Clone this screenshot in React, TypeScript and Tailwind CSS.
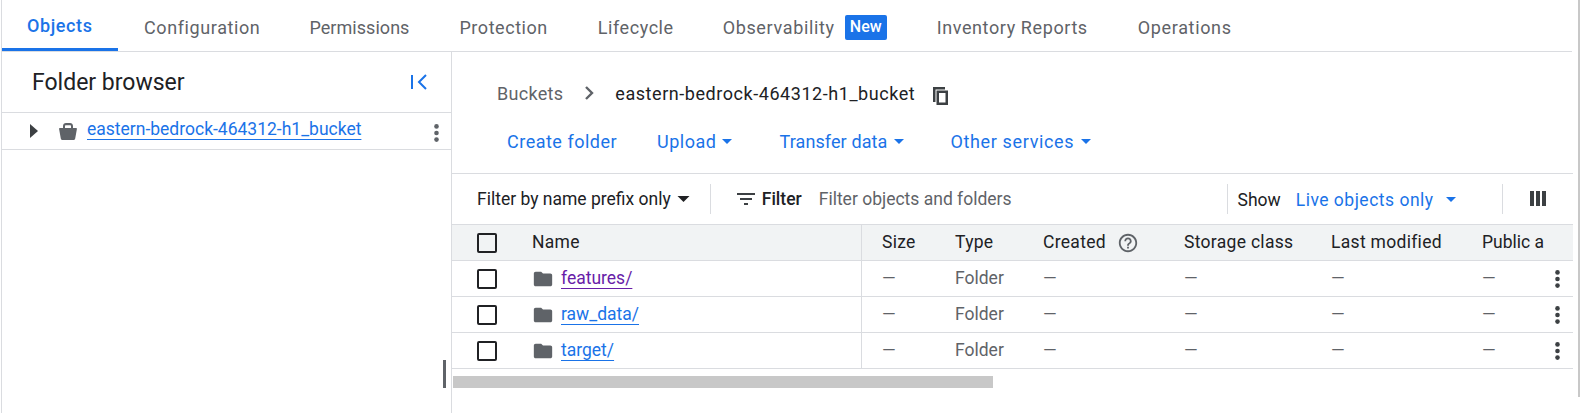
import React from "react";

const Ico = ({ d, className }: { d: string; className?: string }) => (
  <svg viewBox="0 0 24 24" className={className} fill="currentColor"><path d={d} /></svg>
);
const FOLDER = "M10 4H4c-1.1 0-2 .9-2 2v12c0 1.1.9 2 2 2h16c1.1 0 2-.9 2-2V8c0-1.1-.9-2-2-2h-8l-2-2z";
const FILTER = "M10 18h4v-2h-4v2zM3 6v2h18V6H3zm3 7h12v-2H6v2z";
const HELP = "M11 18h2v-2h-2v2zm1-16C6.48 2 2 6.48 2 12s4.48 10 10 10 10-4.48 10-10S17.52 2 12 2zm0 18c-4.41 0-8-3.59-8-8s3.59-8 8-8 8 3.59 8 8-3.59 8-8 8zm0-14c-2.21 0-4 1.79-4 4h2c0-1.1.9-2 2-2s2 .9 2 2c0 2-3 1.750-3 5h2c0-2.250 3-2.500 3-5 0-2.210-1.790-4-4-4z";

const Caret = ({ className }: { className?: string }) => (
  <svg viewBox="0 0 10 5" className={className} fill="currentColor"><path d="M0 0h10L5 5z" /></svg>
);

const Kebab = ({ className }: { className?: string }) => (
  <svg viewBox="0 0 5 18" className={`w-[5px] h-[18px] ${className ?? ""}`} fill="currentColor">
    <circle cx="2.500" cy="2.400" r="2.300" />
    <circle cx="2.500" cy="9" r="2.300" />
    <circle cx="2.500" cy="15.600" r="2.300" />
  </svg>
);

const Tab = ({ label, className }: { label: string; className: string }) => (
  <div className={`h-full flex items-center pt-[3px] text-[18px] text-[#5f6368] ${className}`}>{label}</div>
);

const Checkbox = () => <div className="w-[20px] h-[20px] rounded-[2px] border-2 border-[#202124]" />;

const Row = ({ name, color }: { name: string; color: string }) => (
  <div className="grid grid-cols-[410px_93px_88px_141px_147px_151px_1fr] h-[36px] border-b border-[#dadce0] items-center text-[17.5px] text-[#5f6368]">
    <div className="h-full flex items-center border-r border-[#dadce0] pl-[25px]">
      <Checkbox />
      <Ico d={FOLDER} className="w-[22px] h-[22px] ml-[35px] text-[#5f6368]" />
      <span className={`ml-[7px] underline underline-offset-[4px] decoration-1 ${color}`}>{name}</span>
    </div>
    <span className="pl-[20px]">—</span>
    <span>Folder</span>
    <span>—</span>
    <span>—</span>
    <span>—</span>
    <div className="flex items-center justify-between pr-[13px]">
      <span>—</span>
      <Kebab className="text-[#3c4043]" />
    </div>
  </div>
);

export default function App() {
  return (
    <div className="relative w-[1581px] h-[413px] overflow-hidden bg-white font-['Roboto',sans-serif] text-[#202124] flex flex-col pl-[1px]">
      <div className="absolute left-[1px] top-0 h-full w-[1px] bg-[#dadce0]" />
      <div className="absolute left-[1578px] top-0 h-[397px] w-[2px] bg-[#c8c8c8]" />

      {/* Tabs */}
      <div className="h-[52px] w-[1571px] shrink-0 border-b border-[#dadce0] flex pl-[1px]">
        <div className="h-[51px] w-[116px] border-b-[3px] border-[#1a73e8] flex items-center pt-[3px] pl-[25px] text-[18px] tracking-[0.6px] font-medium text-[#1a73e8]">Objects</div>
        <Tab label="Configuration" className="ml-[26px] tracking-[0.6px]" />
        <Tab label="Permissions" className="ml-[49px] tracking-[0.05px]" />
        <Tab label="Protection" className="ml-[50px] tracking-[0.55px]" />
        <Tab label="Lifecycle" className="ml-[50px] tracking-[0.55px]" />
        <Tab label="Observability" className="ml-[49px] tracking-[0.65px]" />
        <div className="h-full flex items-center ml-[10px] pt-[3px]">
          <span className="bg-[#1a73e8] text-white text-[16px] font-medium rounded-[2px] h-[25px] w-[42px] flex items-center justify-center">New</span>
        </div>
        <Tab label="Inventory Reports" className="ml-[50px] tracking-[0.6px]" />
        <Tab label="Operations" className="ml-[50px] tracking-[0.65px]" />
      </div>

      <div className="flex flex-1 min-h-0">
        {/* Sidebar */}
        <aside className="relative w-[451px] shrink-0 border-r border-[#dadce0]">
          <div className="h-[61px] border-b border-[#dadce0] flex items-center pl-[31px] pr-[24px] justify-between">
            <span className="text-[23px] leading-[28px] mt-[2px] text-[#202124]">Folder browser</span>
            <svg viewBox="0 0 16 16" className="w-[16px] h-[16px] text-[#1a73e8]" fill="none" stroke="currentColor" strokeWidth="2"><path d="M1 1v14" /><path d="M15 1 8 8l7 7" /></svg>
          </div>
          <div className="h-[37px] border-b border-[#dadce0] flex items-center">
            <svg viewBox="0 0 8 14" className="w-[8px] h-[14px] ml-[29px] text-[#3c4043]" fill="currentColor"><path d="M0 0l8 7-8 7z" /></svg>
            <svg viewBox="0 0 18 17" className="w-[18px] h-[17px] ml-[21px] mt-[1px] text-[#5f6368]" fill="currentColor"><path fillRule="evenodd" d="M4 5V3c0-1.700 1.300-3 3-3h10c0 0 0 0 0 0H11c1.700 0 3 1.300 3 3v2h3c.6 0 1 .5.900 1.100l-1.700 9.400c-.1.900-.8 1.500-1.700 1.500H3.500c-.9 0-1.600-.6-1.700-1.500L.1 6.100C0 5.500.4 5 1 5h3zm2 0h6V3.200c0-.6-.4-1-1-1H7c-.6 0-1 .4-1 1V5z" /></svg>
            <span className="ml-[10px] -mt-[3px] text-[17.5px] text-[#1a73e8] underline underline-offset-[4px] decoration-1">eastern-bedrock-464312-h1_bucket</span>
            <Kebab className="ml-auto mr-[12px] mt-[4px] text-[#5f6368]" />
          </div>
          <div className="absolute left-[442px] top-[308px] w-[3px] h-[28px] bg-[#5f6368]" />
        </aside>

        {/* Main */}
        <main className="flex-1 min-w-0 pt-[29px] pr-[8px]">
          <div className="h-[24px] flex items-center pl-[45px] text-[18px]">
            <span className="text-[#5f6368] tracking-[0.3px]">Buckets</span>
            <svg viewBox="0 0 10 14" className="w-[10px] h-[14px] ml-[21px] text-[#5f6368]" fill="none" stroke="currentColor" strokeWidth="2.400"><path d="M2 1 8 7l-6 6" /></svg>
            <span className="ml-[21px] text-[#202124] tracking-[0.55px]">eastern-bedrock-464312-h1_bucket</span>
            <svg viewBox="0 0 15 18" className="w-[15px] h-[18px] ml-[18px] mt-[5px] text-[#3c4043]" fill="currentColor"><path fillRule="evenodd" d="M0 0h12v2.500H2.500V15H0zM3.500 3.500H15V18H3.500zM6 6v9.500h6.500V6z" /></svg>
          </div>
          <div className="h-[24px] mt-[24px] pt-[1px] flex items-center pl-[55px] text-[18px] font-[450] tracking-[0.5px] text-[#1a73e8]">
            <span>Create folder</span>
            <span className="ml-[40px]">Upload</span>
            <Caret className="w-[10px] h-[5px] ml-[6px]" />
            <span className="ml-[47px] tracking-[0.1px]">Transfer data</span>
            <Caret className="w-[10px] h-[5px] ml-[7px]" />
            <span className="ml-[46px] tracking-[0.65px]">Other services</span>
            <Caret className="w-[10px] h-[5px] ml-[7px]" />
          </div>

          {/* Filter bar */}
          <div className="mt-[20px] h-[51px] border-t border-[#dadce0] flex items-center text-[17.5px]">
            <span className="ml-[25px] text-[#202124]">Filter by name prefix only</span>
            <Caret className="w-[13px] h-[6px] ml-[6px] text-[#202124]" />
            <div className="w-px h-[30px] bg-[#dadce0] ml-[20px]" />
            <Ico d={FILTER} className="w-[24px] h-[24px] ml-[23px] text-[#3c4043]" />
            <span className="ml-[4px] font-medium">Filter</span>
            <span className="ml-[17px] text-[#5f6368]">Filter objects and folders</span>
            <div className="w-px h-[30px] bg-[#dadce0] ml-[215px]" />
            <span className="ml-[10px] mt-[3px] text-[#202124]">Show</span>
            <span className="ml-[15px] mt-[2px] font-[450] tracking-[0.5px] text-[#1a73e8]">Live objects only</span>
            <Caret className="w-[10px] h-[5px] ml-[12px] text-[#1a73e8]" />
            <div className="w-px h-[30px] bg-[#dadce0] ml-[46px]" />
            <svg viewBox="0 0 16 15" className="w-[16px] h-[15px] ml-[27px] -mt-[2px] text-[#3c4043]" fill="currentColor"><path d="M0 0h4v15H0zM6 0h4v15H6zM12 0h4v15h-4z" /></svg>
          </div>

          {/* Table */}
          <div className="grid grid-cols-[410px_93px_88px_141px_147px_151px_1fr] h-[37px] bg-[#f1f3f4] border-y border-[#dadce0] items-center text-[17.5px] tracking-[0.3px] text-[#202124]">
            <div className="h-full flex items-center border-r border-[#dadce0] pl-[25px]">
              <Checkbox />
              <span className="ml-[35px]">Name</span>
            </div>
            <span className="pl-[20px]">Size</span>
            <span>Type</span>
            <span className="flex items-center gap-[11px]">Created <Ico d={HELP} className="w-[22px] h-[22px] text-[#5f6368]" /></span>
            <span>Storage class</span>
            <span>Last modified</span>
            <span className="whitespace-nowrap tracking-normal">Public a</span>
          </div>
          <Row name="features/" color="text-[#681da8]" />
          <Row name="raw_data/" color="text-[#1a73e8]" />
          <Row name="target/" color="text-[#1a73e8]" />

          <div className="mt-[7px] ml-[1px] w-[540px] h-[12px] bg-[#c8c8c8]" />
        </main>
      </div>
    </div>
  );
}
